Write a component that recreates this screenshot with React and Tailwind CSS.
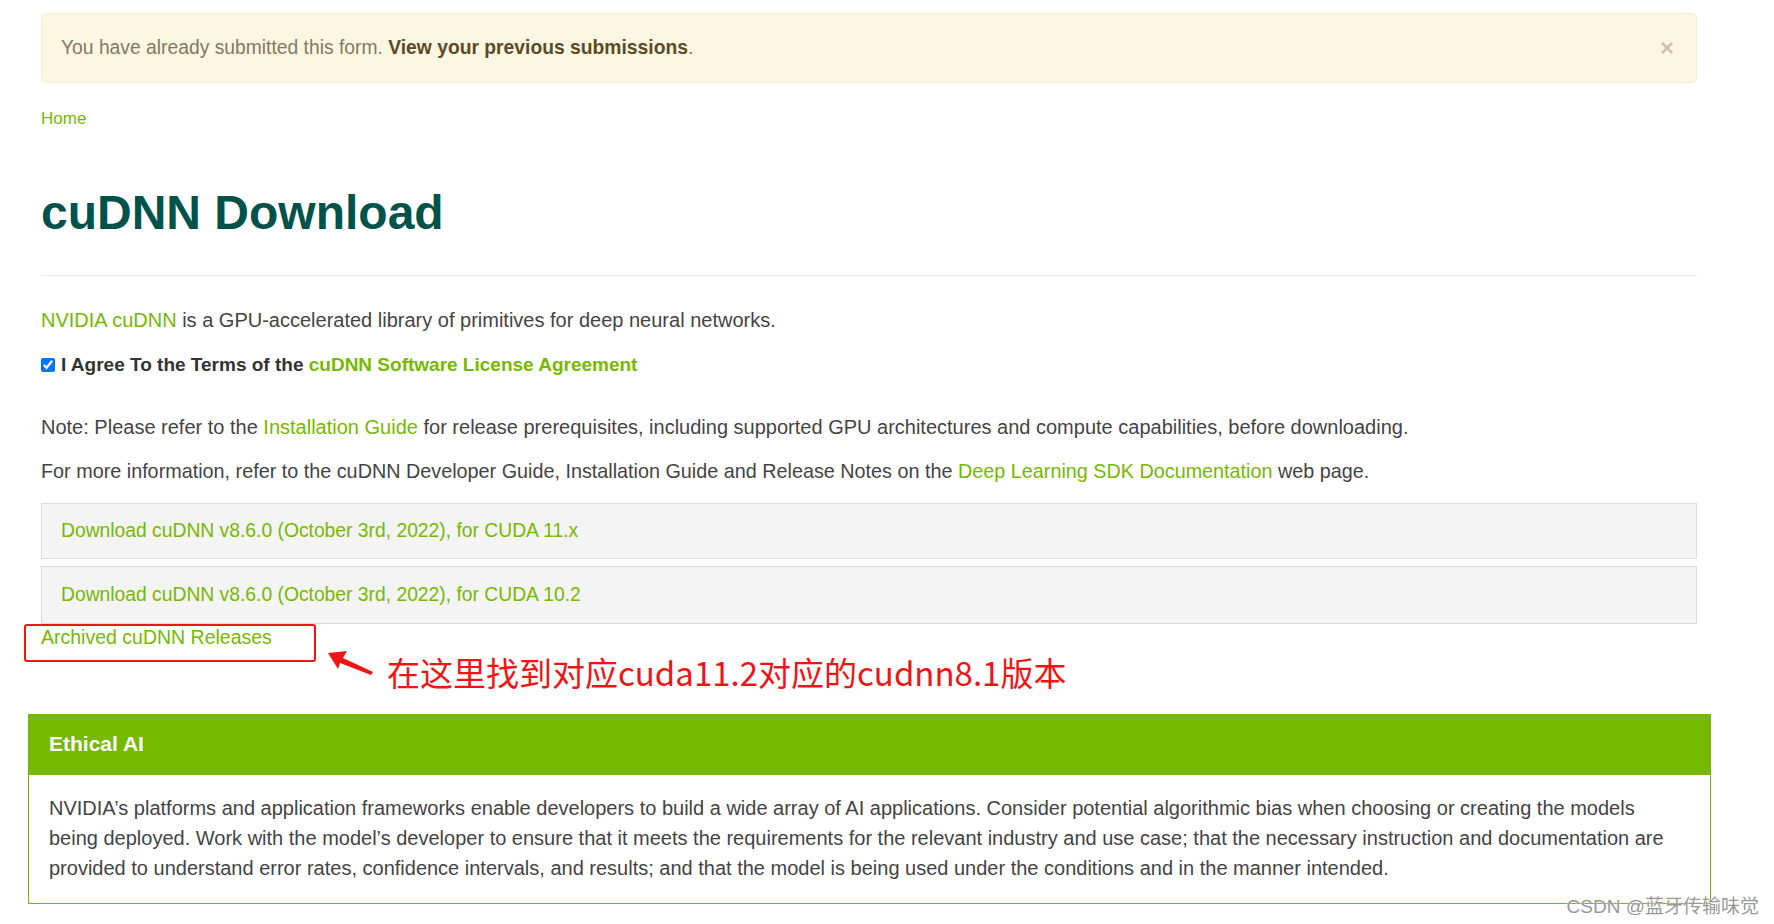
import React from "react";

export default function App() {
  return (
    <div className="relative w-[1774px] h-[924px] overflow-hidden bg-white font-['Liberation_Sans','Noto_Sans_CJK_SC',sans-serif] text-[#444]">
      <div className="w-[1656px] ml-[41px] pt-[13px]">
        {/* Alert */}
        <div className="h-[70px] rounded-[6px] bg-[#fcf7e3] border border-[#f5eed3] flex items-center justify-between pl-[19px] pr-[22px] text-[19.3px]">
          <div className="text-[#857860]">
            You have already submitted this form.{" "}
            <span className="font-bold text-[#5b4a26]">View your previous submissions</span>.
          </div>
          <div className="text-[#cdc5ab] text-[24px] font-bold leading-none">×</div>
        </div>

        {/* Breadcrumb */}
        <div className="mt-[26px] text-[17px] leading-[20px] text-[#76b900]">Home</div>

        {/* Title */}
        <h1 className="mt-[60px] text-[48px] leading-[48px] font-bold text-[#00524a]">cuDNN Download</h1>

        <div className="mt-[38px] border-t border-[#e6e6e6]" />

        <p className="mt-[31px] text-[20px] leading-[26px]">
          <span className="text-[#76b900]">NVIDIA cuDNN</span> is a GPU-accelerated library of primitives for deep neural networks.
        </p>

        <div className="mt-[19px] flex items-center gap-[6px] text-[19px] leading-[26px]">
          <input type="checkbox" defaultChecked readOnly className="w-[14px] h-[14px] m-0" />
          <span className="font-bold text-[#333]">
            I Agree To the Terms of the <span className="text-[#76b900]">cuDNN Software License Agreement</span>
          </span>
        </div>

        <p className="mt-[36px] text-[20px] leading-[26px]">
          Note: Please refer to the <span className="text-[#76b900]">Installation Guide</span> for release prerequisites, including supported GPU architectures and compute capabilities, before downloading.
        </p>

        <p className="mt-[18px] text-[19.8px] leading-[26px]">
          For more information, refer to the cuDNN Developer Guide, Installation Guide and Release Notes on the{" "}
          <span className="text-[#76b900]">Deep Learning SDK Documentation</span> web page.
        </p>

        <div className="mt-[19px] h-[56px] bg-[#f4f4f4] border border-[#dcdcdc] flex items-center pl-[19px] text-[19.3px] text-[#76b900]">
          Download cuDNN v8.6.0 (October 3rd, 2022), for CUDA 11.x
        </div>
        <div className="mt-[7px] h-[58px] bg-[#f4f4f4] border border-[#dcdcdc] flex items-center pl-[19px] text-[19.3px] text-[#76b900]">
          Download cuDNN v8.6.0 (October 3rd, 2022), for CUDA 10.2
        </div>

        {/* Archived link with annotation */}
        <div className="relative mt-[0px] text-[19.5px] leading-[26px] text-[#76b900]">
          Archived cuDNN Releases
          <div className="absolute left-[-17px] top-[0px] w-[292px] h-[38px] border-[2.5px] border-[#f01515] rounded-[3px]" />
          <svg className="absolute left-[287px] top-[27px]" width="46" height="26" viewBox="0 0 46 26">
            <polygon points="0,2 19,0 15,7 45,21 43,24 12,12 10,18" fill="#f01515" />
          </svg>
          <div className="absolute left-[346px] top-[26px] whitespace-nowrap text-[33px] leading-[44px] text-[#f01515] font-['Noto_Sans_CJK_SC',sans-serif]">
            在这里找到对应cuda11.2对应的cudnn8.1版本
          </div>
        </div>

        {/* Ethical AI */}
        <div className="mt-[64px] -ml-[13px] -mr-[14px] border border-[#76b900]">
          <div className="h-[60px] bg-[#76b900] flex items-center pl-[20px] pb-[3px] text-[21px] font-bold text-white">Ethical AI</div>
          <div className="pt-[18px] pb-[20px] pl-[20px] pr-[20px] text-[20px] leading-[30px]">
            <div className="whitespace-nowrap">NVIDIA’s platforms and application frameworks enable developers to build a wide array of AI applications. Consider potential algorithmic bias when choosing or creating the models</div>
            <div className="whitespace-nowrap">being deployed. Work with the model’s developer to ensure that it meets the requirements for the relevant industry and use case; that the necessary instruction and documentation are</div>
            <div className="whitespace-nowrap">provided to understand error rates, confidence intervals, and results; and that the model is being used under the conditions and in the manner intended.</div>
          </div>
        </div>
      </div>

      <div className="absolute right-[15px] bottom-[5px] text-[19px] leading-[24px] text-[#999] [text-shadow:0_0_2px_#fff] font-['Liberation_Sans','Noto_Sans_CJK_SC',sans-serif]">
        CSDN @蓝牙传输味觉
      </div>
    </div>
  );
}
